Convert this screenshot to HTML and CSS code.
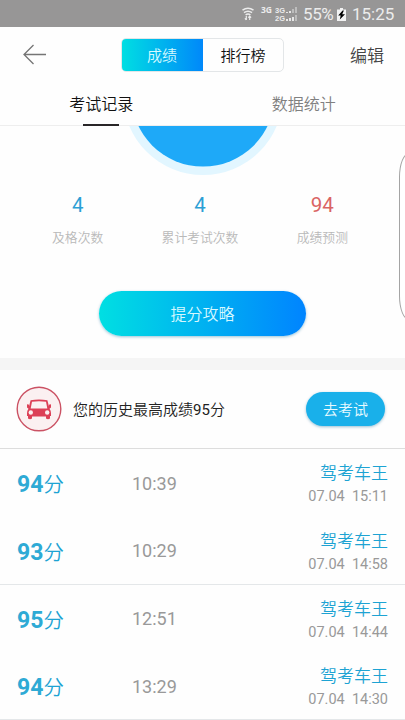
FILE: index.html
```
<!DOCTYPE html>
<html lang="zh-CN">
<head>
<meta charset="utf-8">
<title>考试记录</title>
<link rel="stylesheet" href="styles.css">
</head>
<body>
<div class="screen">
  <div class="status">
    <svg class="wifi" width="14" height="16" viewBox="0 0 14 16" fill="none" stroke="#ececec" stroke-width="1.5">
      <path d="M1.500 4.200Q7 .2 12.500 4.200M3 6.700Q7 3.600 11 6.700M4.600 9Q7 7 9.400 9"/>
      <path d="M5.300 10v4M3.900 12.300l1.400 1.500M8.700 14v-4M7.300 11.600l1.400-1.500 1.400 1.500" stroke-width="1.200"/>
    </svg>
    <span class="net">3G</span>
    <span class="dual"><span>3G</span><span>2G</span></span>
    <svg class="bars" width="12" height="15" viewBox="0 0 12 15">
      <path fill="#e6e6e6" d="M0 5h2v1H0zM3 4h2v2H3zM0 12h2v2H0zM3 11h2v3H3zM6 10h2v4H6z"/>
      <path fill="#bdbdbd" d="M6 2h2v4H6zM9 0h2v6H9zM9 8h2v6H9z"/>
    </svg>
    <span class="pct">55%</span>
    <svg class="battery" width="9" height="13" viewBox="0 0 9 13"><path fill="#f2f2f2" d="M3 0h3v1.500h3V13H0V1.500h3z"/><path d="M5.600 2.500L1.200 7.500h2.500L2.800 11.500 8 6.300H5.200l1.700-3.800z"/></svg>
    <span class="clock">15:25</span>
  </div>
  <header class="header">
    <svg class="back" width="24" height="22" viewBox="0 0 24 22" fill="none" stroke="#757575" stroke-width="1.300"><path d="M23 10.500H1M10.500 1L1 10.500l9.500 9.500"/></svg>
    <div class="segment"><span class="seg on">成绩</span><span class="seg">排行榜</span></div>
    <span class="edit">编辑</span>
  </header>
  <nav class="tabs"><span class="tab active">考试记录</span><span class="tab">数据统计</span></nav>
  <section class="summary">
    <svg class="dial" width="160" height="50" viewBox="0 0 160 50"><circle cx="80" cy="-31" r="80" fill="#e2f6ff"/><circle cx="80" cy="-31" r="71.600" fill="#1ea9f8"/></svg>
    <div class="stats">
      <div class="stat"><b>4</b><span>及格次数</span></div>
      <div class="stat"><b>4</b><span>累计考试次数</span></div>
      <div class="stat red"><b>94</b><span>成绩预测</span></div>
    </div>
    <div class="guide">提分攻略</div>
  </section>
  <section class="best">
    <svg class="car" width="46" height="46" viewBox="0 0 46 46">
      <circle cx="23" cy="23" r="21.800" fill="#fbf0f1" stroke="#cb5264" stroke-width="1.400"/>
      <path fill="#dc4057" fill-rule="evenodd" d="M14.600 14.200Q23 12.600 31.400 14.200L33 20.500V19Q33.500 18 35 18.500V21.500L33.500 22.800Q35 24.500 35 27V30H34V32.500Q32 34 30 32.500V30.500H16V32.500Q14 34 12 32.500V30H11V27Q11 24.500 12.500 22.800L11 21.500V18.500Q12.500 18 13 19V20.500ZM16 15.700L14.700 22.500H31.300L30 15.700Q23 14.600 16 15.700Z"/>
      <circle cx="14.800" cy="26.500" r="2.200" fill="#fbf0f1"/><circle cx="31.200" cy="26.500" r="2.200" fill="#fbf0f1"/>
    </svg>
    <span class="best-text">您的历史最高成绩<span class="num">95</span>分</span>
    <span class="go">去考试</span>
  </section>
  <main class="records">
    <div class="record"><div class="score"><b>94</b>分</div><div class="used">10:39</div><div class="meta"><span class="rank">驾考车王</span><span class="date">07.04&nbsp; 15:11</span></div></div>
    <div class="record line"><div class="score"><b>93</b>分</div><div class="used">10:29</div><div class="meta"><span class="rank">驾考车王</span><span class="date">07.04&nbsp; 14:58</span></div></div>
    <div class="record"><div class="score"><b>95</b>分</div><div class="used">12:51</div><div class="meta"><span class="rank">驾考车王</span><span class="date">07.04&nbsp; 14:44</span></div></div>
    <div class="record line"><div class="score"><b>94</b>分</div><div class="used">13:29</div><div class="meta"><span class="rank">驾考车王</span><span class="date">07.04&nbsp; 14:30</span></div></div>
  </main>
  <div class="edge"></div>
</div>
</body>
</html>
```
FILE: styles.css
```
* { box-sizing: border-box; }
body { margin: 0; background: #fff; }
.screen {
  position: relative;
  width: 405px;
  height: 720px;
  overflow: hidden;
  background: #fefefe;
  font-family: Roboto, "Noto Sans CJK SC", sans-serif;
  font-weight: 350;
  color: #333;
}
.status {
  height: 27px;
  background: #979696;
  color: #ececec;
  display: flex;
  align-items: center;
  padding: 1px 11px 0 0;
  justify-content: flex-end;
  font-weight: 400;
}
.wifi { margin-right: 6px; }
.net { font: bold 8.5px/10px "Open Sans", sans-serif; margin: -8px 3px 0 0; }
.dual { display: grid; row-gap: 1px; font: bold 7.5px/7px "Liberation Sans", sans-serif; }
.dual span { height: 7px; overflow: hidden; }
.bars { margin: 0 5px 0 1px; }
.pct { font-size: 17px; width: 32px; letter-spacing: -.4px; }
.battery { margin: 0 6px 0 2px; }
.clock { font-size: 17px; width: 42px; }
.header { height: 55px; display: flex; align-items: center; padding: 0 21px 0 23px; }
.back { margin-right: 74px; }
.segment {
  display: flex;
  width: 163px;
  height: 34px;
  border: 1px solid #e3e6e8;
  border-radius: 5px;
  overflow: hidden;
  font-size: 15px;
}
.seg { flex: 1; line-height: 34px; text-align: center; color: #111; }
.seg.on {
  flex: 0 0 82px;
  margin: -1px 0 -1px -1px;
  line-height: 36px;
  color: #d5faff;
  background: linear-gradient(90deg, #00dfe2, #0088fa);
}
.edit { margin-left: auto; font-size: 17px; color: #444; }
.tabs { display: flex; height: 44px; border-bottom: 1px solid #eee; }
.tab { position: relative; flex: 1; text-align: center; font-size: 16px; line-height: 45px; color: #808080; }
.tab.active { color: #111; }
.tab.active::after {
  content: "";
  position: absolute;
  left: 83px;
  bottom: -1px;
  width: 36px;
  height: 2px;
  background: #292628;
}
.summary { height: 244px; border-bottom: 12px solid #f5f5f5; display: flex; flex-direction: column; align-items: center; }
.dial { display: block; }
.stats { display: grid; grid-template-columns: 1fr 1fr 1fr; width: 367px; margin: 15px 5px 0 0; height: 100px; }
.stat { display: flex; flex-direction: column; align-items: center; color: #b9b9b9; font-size: 12.8px; line-height: 20px; }
.stat b { font-size: 20.5px; line-height: 28px; font-weight: 400; color: #2c9fd5; margin-bottom: 9px; }
.stat.red b { color: #da6464; }
.guide {
  width: 207px;
  height: 45px;
  border-radius: 23px;
  background: linear-gradient(90deg, #00dfe2, #0084ff);
  box-shadow: 0 1px 3px rgba(0, 110, 160, .4);
  color: #d5f8ff;
  font-size: 16px;
  line-height: 47px;
  text-align: center;
}
.best { height: 79px; border-bottom: 1px solid #ddd; display: flex; align-items: center; padding: 0 20px 0 16px; }
.best-text { margin: 0 0 1px 11px; font-size: 15px; color: #222; }
.num { font-weight: 400; }
.go {
  margin-left: auto;
  width: 79px;
  height: 34px;
  border-radius: 17px;
  background: #19b0ea;
  box-shadow: 0 1px 3px rgba(0, 100, 150, .4);
  color: #e8faff;
  font-size: 15px;
  line-height: 36px;
  text-align: center;
}
.record { height: 67.75px; display: grid; grid-template-columns: 115px 1fr auto; align-items: center; padding: 1px 17px 0; }
.record.line { border-bottom: 1px solid #e4e7e9; }
.score { font-size: 20.5px; color: #1da3d3; white-space: nowrap; }
.score b { font-size: 23px; font-weight: 700; color: #2eaad5; }
.used { font-size: 18px; font-weight: 400; color: #999; }
.meta { display: flex; flex-direction: column; align-items: flex-end; padding-top: 2px; }
.rank { font-size: 17px; line-height: 25px; color: #1da3d3; }
.date { font-size: 14.5px; line-height: 21px; font-weight: 400; color: #999; }
.edge {
  position: absolute;
  left: 399px;
  top: 153px;
  width: 30px;
  height: 167px;
  border: 1px solid #a4a4a4;
  border-radius: 10px / 24px;
  background: #fff;
}
```
